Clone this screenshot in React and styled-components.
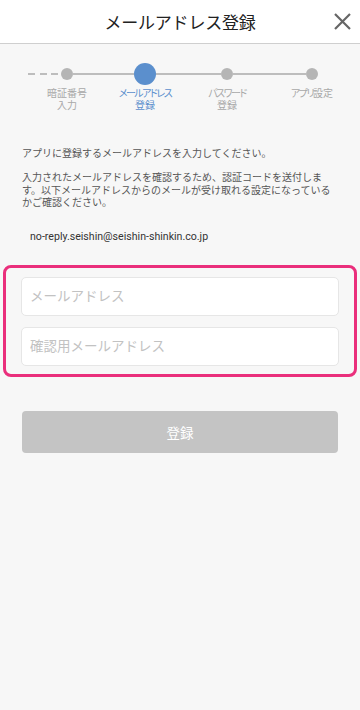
import React from "react"
import styled, { createGlobalStyle } from "styled-components";

const GlobalStyle = createGlobalStyle`
  html, body {
    margin: 0;
    padding: 0;
    background: #f7f7f7;
  }
  body {
    font-family: Roboto, "Noto Sans CJK JP", sans-serif;
  }
`

const Page = styled.div`
  width: 360px;
  min-height: 710px;
  background: #f7f7f7;
`

const Header = styled.header`
  height: 43px;
  background: #fff;
  border-bottom: 1px solid #cfcfcf;
  display: grid;
  grid-template-columns: 1fr auto 1fr;
  align-items: center;
`

const Title = styled.h1`
  grid-column: 2;
  margin: 0;
  font-size: 17px;
  font-weight: 400;
  color: #222;
  letter-spacing: -0.2px;
`

const CloseButton = styled.button`
  grid-column: 3;
  justify-self: end;
  margin-right: 9px;
  padding: 0;
  border: none;
  background: none;
  width: 17px;
  height: 17px;
  display: flex;
`

const Stepper = styled.div`
  display: flex;
  padding: 19px 0 0 28px;
`

const Step = styled.div`
  width: ${p => p.w}px;
  display: flex;
  flex-direction: column;
  align-items: center;
`

const Track = styled.div`
  width: 100%;
  height: 22px;
  display: flex;
  align-items: center;
`

const Line = styled.div`
  flex: 1;
  height: 2px;
  background: ${p =>
    p.kind === "dashed"
      ? "repeating-linear-gradient(to right, #bdbdbd 0 7px, transparent 7px 11.5px)"
      : p.kind === "none"
      ? "transparent"
      : "#bdbdbd"};
`

const Dot = styled.div`
  width: ${p => (p.active ? 22 : 12)}px;
  height: ${p => (p.active ? 22 : 12)}px;
  border-radius: 50%;
  background: ${p => (p.active ? "#5b8fcd" : "#b5b5b5")};
  flex-shrink: 0;
`

const StepLabel = styled.div`
  margin-top: 3px;
  font-size: 10px;
  line-height: 12px;
  text-align: center;
  font-feature-settings: "palt";
  color: ${p => (p.active ? "#5b8fcd" : "#a8a8a8")};
`

const LabelLine = styled.div`
  white-space: nowrap;
`

const Kana = styled.span`
  letter-spacing: -1.5px;
`

const Intro = styled.section`
  padding: 36px 22px 0;
  color: #555;
  font-size: 10px;
  line-height: 12.5px;
`

const Paragraph = styled.p`
  margin: 0 0 11.5px;
`

const Email = styled.div`
  margin: 20px 0 0 30px;
  font-size: 10.6px;
  line-height: 14px;
  color: #333;
`

const Highlight = styled.div`
  margin: 21px 3px 0;
  border: 3px solid #ea2f7c;
  border-radius: 8px;
  padding: 9px 15px 8px;
  display: flex;
  flex-direction: column;
  gap: 11px;
`

const Input = styled.input`
  box-sizing: border-box;
  height: 39px;
  width: 100%;
  background: #fff;
  border: 1px solid #e6e6e6;
  border-radius: 5px;
  padding: 0 8px;
  font-family: Roboto, "Noto Sans CJK JP", sans-serif;
  font-size: 13.5px;
  color: #333;
  outline: none;
  &::placeholder {
    color: #c2c2c2;
  }
`

const SubmitButton = styled.button`
  display: block;
  margin: 34px 22px 0;
  width: 316px;
  height: 42px;
  border: none;
  border-radius: 4px;
  background: #c4c4c4;
  color: #fff;
  font-family: Roboto, "Noto Sans CJK JP", sans-serif;
  font-size: 13.5px;
`

const steps = [
  { lines: [[null, "暗証番号"], [null, "入力"]], w: 78, left: "dashed", right: "solid" },
  { lines: [["メールアドレス", null], [null, "登録"]], w: 78, left: "solid", right: "solid", active: true },
  { lines: [["パスワード", null], [null, "登録"]], w: 86, left: "solid", right: "solid" },
  { lines: [["アプリ", "設定"]], w: 84, left: "solid", right: "none" },
]

function App() {
  return (
    <Page>
      <GlobalStyle />
      <Header>
        <Title>メールアドレス登録</Title>
        <CloseButton aria-label="閉じる">
          <svg width="17" height="17" viewBox="0 0 17 17">
            <path d="M1 1 L16 16 M16 1 L1 16" stroke="#666" strokeWidth="2.2" strokeLinecap="butt" />
          </svg>
        </CloseButton>
      </Header>

      <Stepper>
        {steps.map((step, i) => (
          <Step key={i} w={step.w}>
            <Track>
              <Line kind={step.left} />
              <Dot active={step.active} />
              <Line kind={step.right} />
            </Track>
            <StepLabel active={step.active}>
              {step.lines.map(([kana, rest], j) => (
                <LabelLine key={j}>
                  {kana && <Kana>{kana}</Kana>}
                  {rest}
                </LabelLine>
              ))}
            </StepLabel>
          </Step>
        ))}
      </Stepper>

      <Intro>
        <Paragraph>アプリに登録するメールアドレスを入力してください。</Paragraph>
        <Paragraph>
          入力されたメールアドレスを確認するため、認証コードを送付します。以下メールアドレスからのメールが受け取れる設定になっているかご確認ください。
        </Paragraph>
      </Intro>

      <Email>no-reply.seishin@seishin-shinkin.co.jp</Email>

      <Highlight>
        <Input type="email" placeholder="メールアドレス" />
        <Input type="email" placeholder="確認用メールアドレス" />
      </Highlight>

      <SubmitButton disabled>登録</SubmitButton>
    </Page>
  )
}

export default App
